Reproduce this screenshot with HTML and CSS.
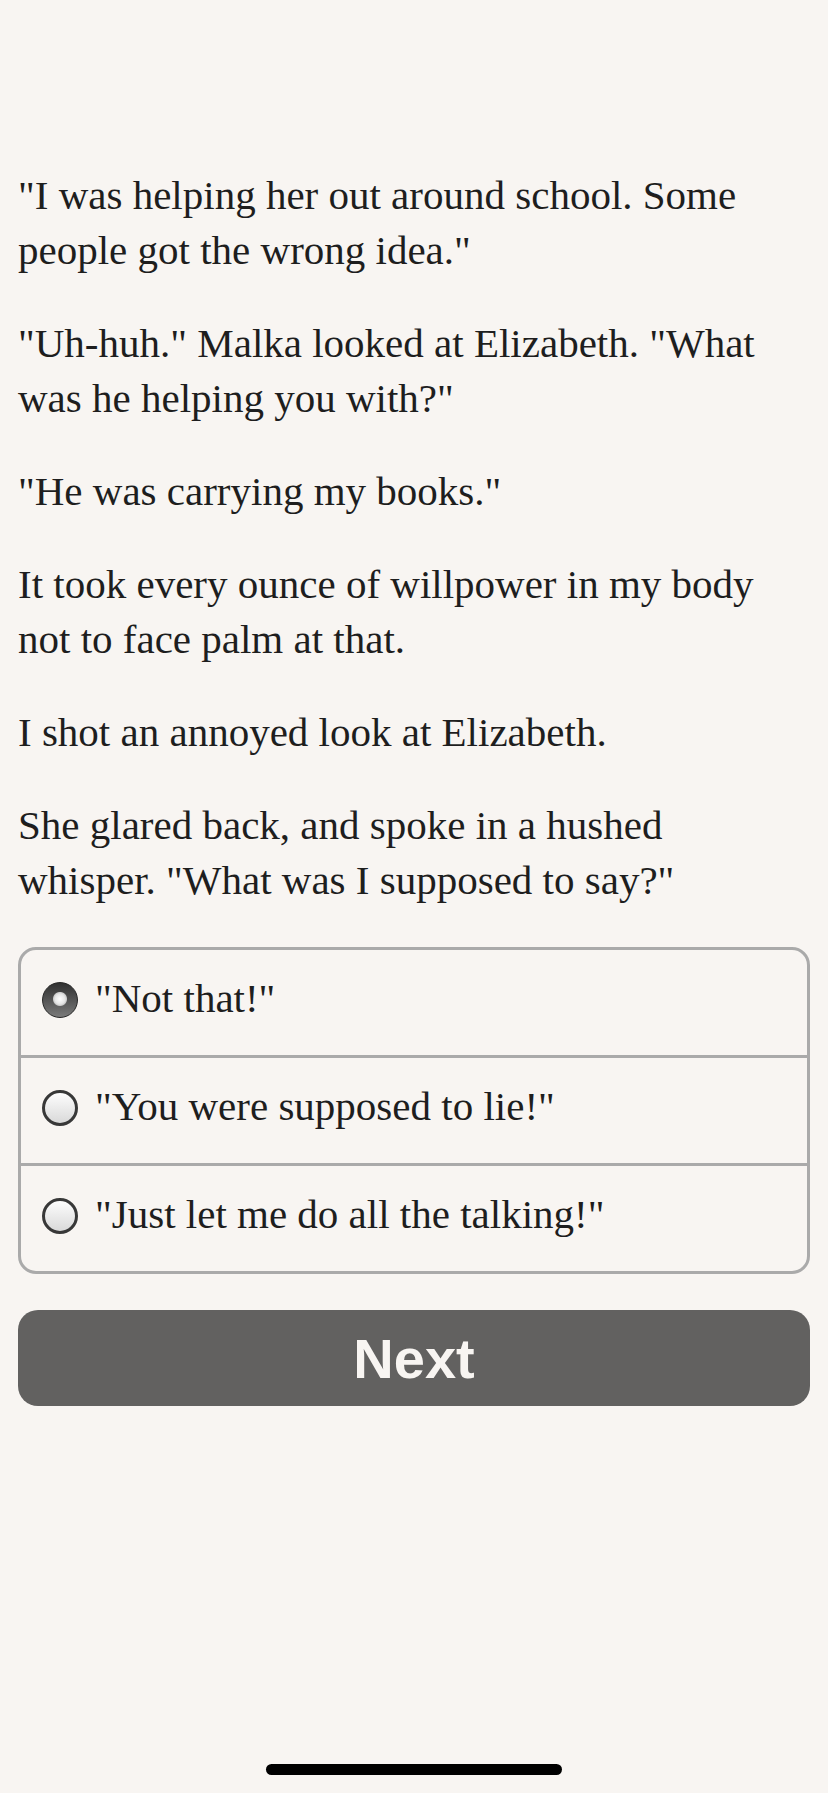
FILE: index.html
```html
<html>
    <head>
        <meta http-equiv="content-type" content="text/html; charset=utf-8" />
        <link rel="stylesheet" href="styles.css">
        <title>Story</title>
    </head>
    <body>
        <div class="page">
            <div class="story">
                <p>"I was helping her out around school. Some people got the wrong idea."</p>
                <p>"Uh-huh." Malka looked at Elizabeth. "What was he helping you with?"</p>
                <p>"He was carrying my books."</p>
                <p>It took every ounce of willpower in my body not to face palm at that.</p>
                <p>I shot an annoyed look at Elizabeth.</p>
                <p>She glared back, and spoke in a hushed whisper. "What was I supposed to say?"</p>
            </div>

            <div class="choices">
                <label class="choice">
                    <input type="radio" name="choice" class="radio" checked>
                    <span class="choice-text">"Not that!"</span>
                </label>
                <label class="choice">
                    <input type="radio" name="choice" class="radio">
                    <span class="choice-text">"You were supposed to lie!"</span>
                </label>
                <label class="choice">
                    <input type="radio" name="choice" class="radio">
                    <span class="choice-text">"Just let me do all the talking!"</span>
                </label>
            </div>

            <button class="next">Next</button>
        </div>
        <div class="home-bar"></div>
    </body>
</html>
```

FILE: styles.css
```css
@charset "UTF-8";
html, body {
    margin: 0;
    padding: 0;
    height: 100%;
}
body {
    background: #f8f5f2;
    color: #1e1e1e;
    font-family: "Liberation Serif", "Times New Roman", serif;
    position: relative;
    overflow: hidden;
}
.page {
    padding: 168px 18px 0 18px;
}
.story {
    display: flex;
    flex-direction: column;
    gap: 38px;
    padding-right: 12px;
}
.story p {
    margin: 0;
    font-size: 41px;
    line-height: 55px;
}
/* box with the three options */
.choices {
    margin-top: 39px;
    border: 3px solid #aaa;
    border-radius: 18px;
    display: flex;
    flex-direction: column;
}
.choice {
    height: 105px;
    display: flex;
    align-items: center;
    padding-left: 21px;
    gap: 17px;
    font-size: 41px;
}
.choice + .choice {
    border-top: 3px solid #aaa;
}
.choice-text {
    margin-bottom: 10px;
}
.radio {
    -webkit-appearance: none;
    appearance: none;
    margin: 0 0 6px 0;
    width: 36px;
    height: 36px;
    border-radius: 50%;
    box-sizing: border-box;
    border: 3px solid #383838;
    background: linear-gradient(#fdfdfd, #d9d9d9);
    flex: none;
}
.radio:checked {
    border: 1px solid #262626;
    background:
        radial-gradient(circle at 50% 47%, #fff 0, #e6e6e6 5px, #cdcdcd 6.5px, transparent 7.5px),
        linear-gradient(#303030, #7a7a7a);
}
.next {
    display: block;
    width: 100%;
    margin-top: 36px;
    height: 96px;
    border: none;
    border-radius: 20px;
    background: #626160;
    color: #f8f5f2;
    font-family: "Liberation Sans", Arial, sans-serif;
    font-weight: bold;
    font-size: 56px;
    padding: 0;
}
.home-bar {
    position: absolute;
    left: 266px;
    bottom: 18px;
    width: 296px;
    height: 11px;
    border-radius: 6px;
    background: #000;
}
```
